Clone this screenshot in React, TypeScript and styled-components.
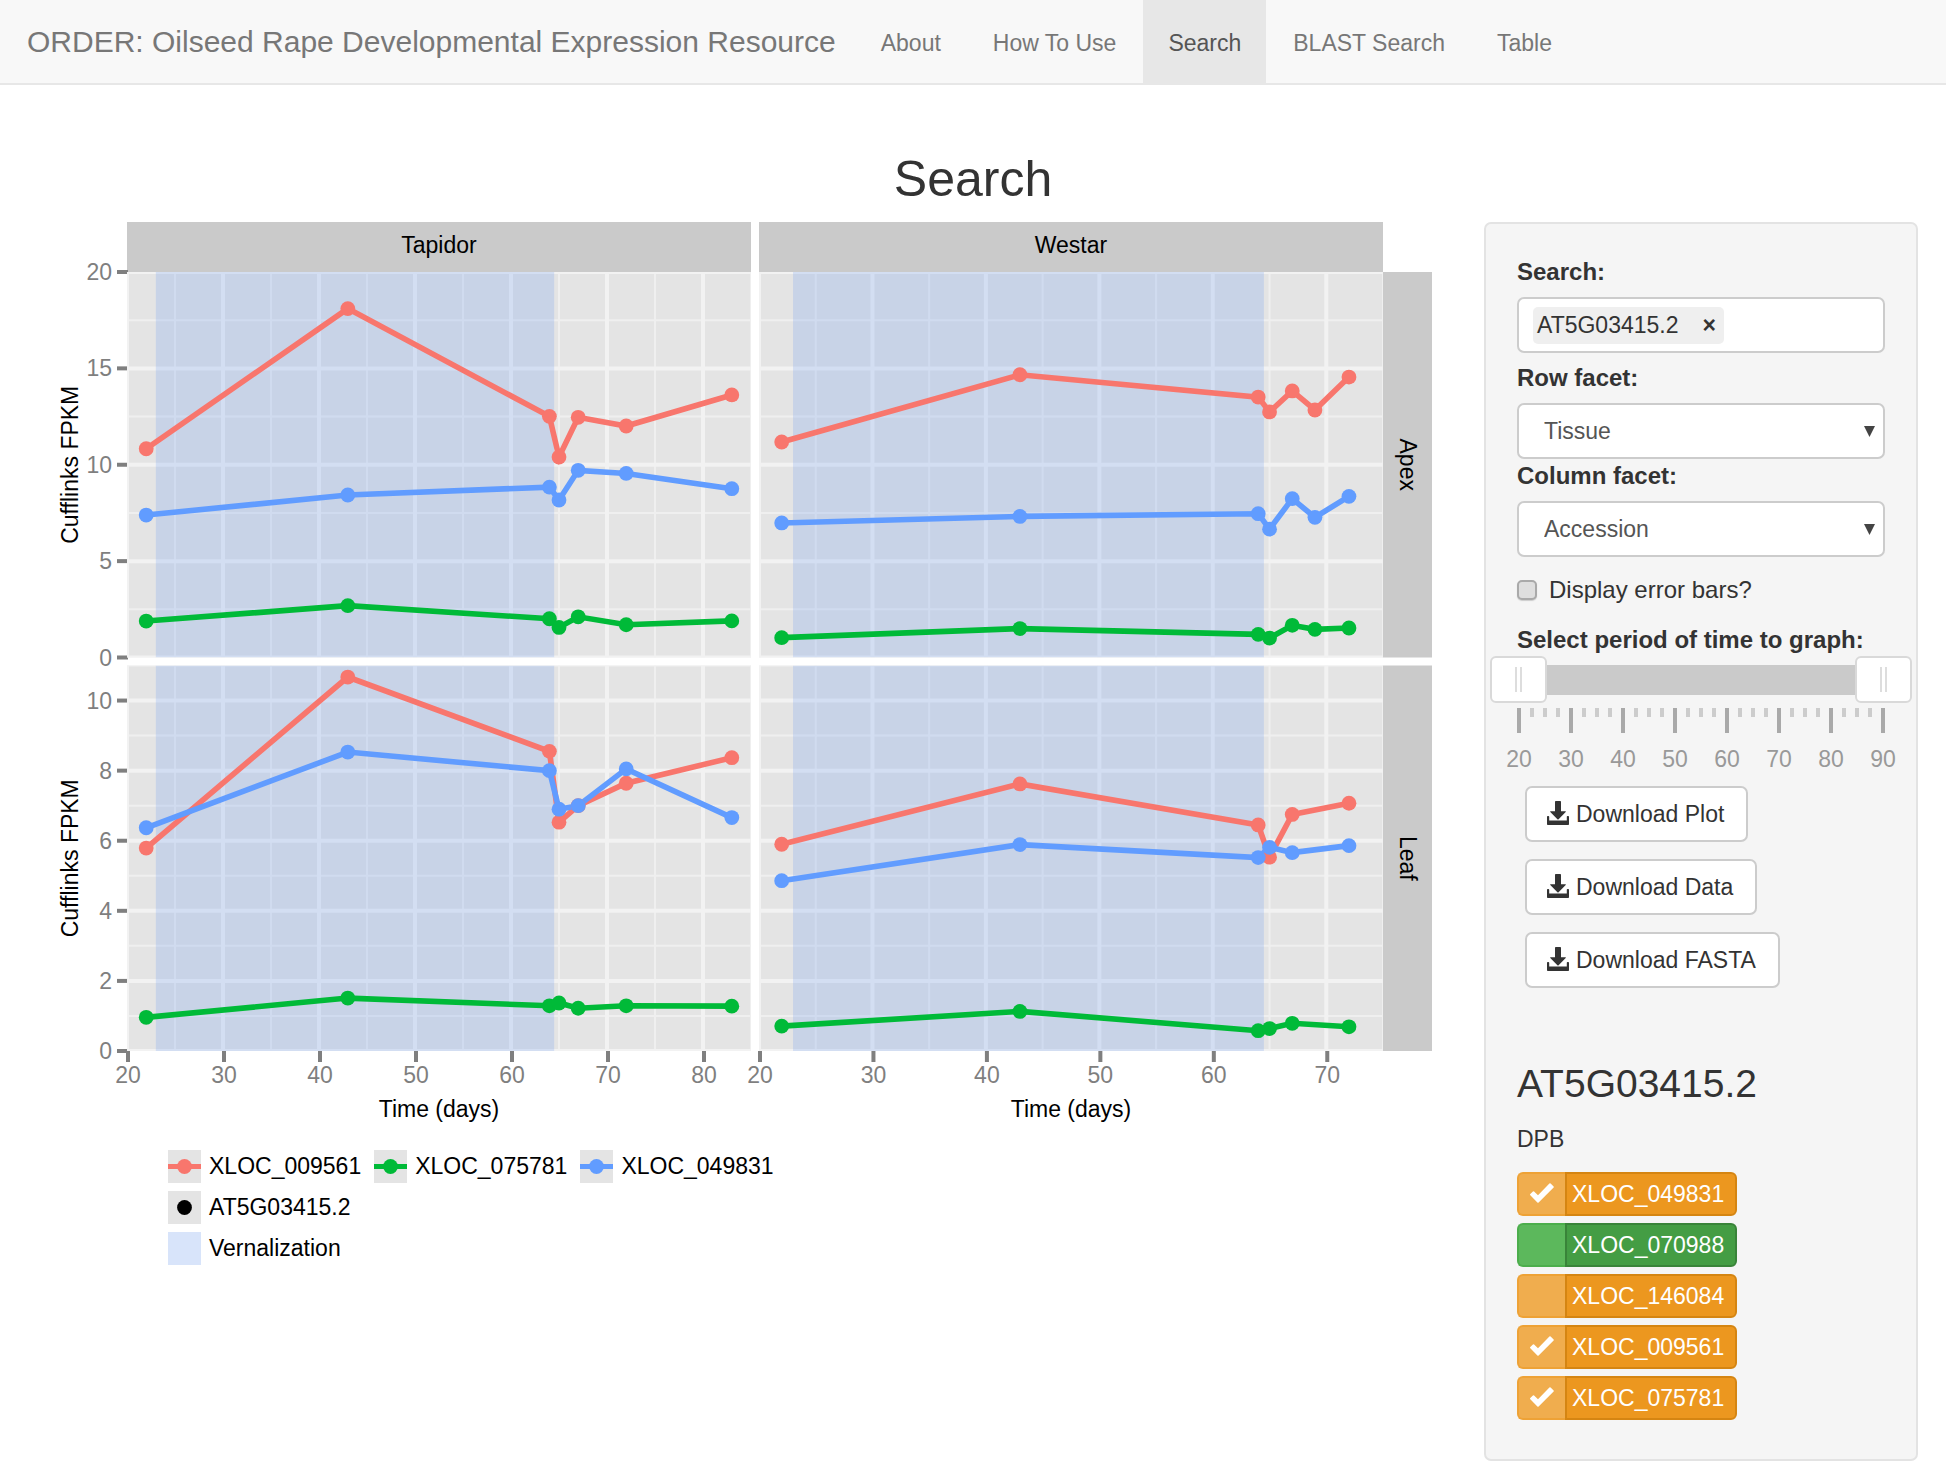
import React, { useState } from "react";
import styled, { createGlobalStyle } from "styled-components";

const GlobalStyle = createGlobalStyle`
  *, *::before, *::after { box-sizing: border-box; }
  body {
    margin: 0;
    background: #fff;
    color: #333;
    font: 23px/34px "Liberation Sans", Arial, sans-serif;
  }
  button, input, select { font: inherit; color: inherit; margin: 0; }
`;

/* ---------- navigation ---------- */

const Navbar = styled.nav`
  display: flex;
  flex-wrap: wrap;
  align-items: stretch;
  min-height: 85px;
  background: #f8f8f8;
  box-shadow: inset 0 -2px #e7e7e7;
`;

const Brand = styled.a`
  display: flex;
  align-items: center;
  padding: 0 20px 2px 27px;
  font-size: 30px;
  color: #777;
  text-decoration: none;
`;

const NavLinks = styled.ul`
  display: flex;
  flex-wrap: wrap;
  gap: 2px;
  margin: 0;
  padding: 0;
  list-style: none;
`;

const NavLink = styled.a<{ $active: boolean }>`
  display: flex;
  align-items: center;
  height: 100%;
  padding: 0 25px;
  color: ${(p) => (p.$active ? "#555" : "#777")};
  background: ${(p) => (p.$active ? "#e7e7e7" : "transparent")};
  text-decoration: none;
`;

/* ---------- page ---------- */

const PageTitle = styled.h2`
  margin: 67px 0 15px;
  font-size: 50px;
  line-height: 55px;
  font-weight: 400;
  text-align: center;
`;

const Columns = styled.div`
  display: grid;
  grid-template-columns: minmax(0, 1fr) 434px;
  gap: 52px;
  align-items: start;
  padding: 0 28px;
`;

const Chart = styled.svg`
  display: block;
  width: 100%;
  height: auto;
  font-size: 23px;
`;

const Legend = styled.div`
  display: flex;
  flex-direction: column;
  gap: 8px;
  margin: 24px 0 0 140px;
  color: #000;
`;

const LegendRow = styled.div`
  display: flex;
  gap: 13px;
`;

const LegendItem = styled.div`
  display: flex;
  gap: 8px;
  height: 33px;
  line-height: 32px;
`;

/* ---------- sidebar ---------- */

const Well = styled.aside`
  padding: 31px;
  background: #f5f5f5;
  border: 2px solid #e3e3e3;
  border-radius: 7px;
`;

const FieldLabel = styled.label`
  display: block;
  margin-bottom: 8px;
  font-size: 24px;
  font-weight: 700;
`;

const TagBox = styled.div`
  display: flex;
  align-items: center;
  gap: 8px;
  height: 56px;
  margin-bottom: 8px;
  padding: 0 14px;
  background: #fff;
  border: 2px solid #ccc;
  border-radius: 7px;
`;

const Tag = styled.span`
  display: flex;
  align-items: center;
  gap: 24px;
  height: 37px;
  padding: 0 8px 0 4px;
  background: #efefef;
  border-radius: 5px;
`;

const TagRemove = styled.button`
  padding: 0;
  border: 0;
  background: none;
  font-weight: 700;
`;

const TagInput = styled.input`
  flex: 1;
  min-width: 0;
  border: 0;
  outline: 0;
  background: none;
`;

const SelectWrap = styled.div`
  position: relative;
  color: #555;
`;

const Select = styled.select`
  display: block;
  width: 100%;
  height: 56px;
  padding: 0 40px 0 25px;
  appearance: none;
  background: #fff;
  border: 2px solid #ccc;
  border-radius: 7px;
`;

const SelectArrow = styled.svg`
  position: absolute;
  top: 23px;
  right: 10px;
  pointer-events: none;
  fill: #444;
`;

const CheckRow = styled.label`
  display: flex;
  align-items: center;
  gap: 12px;
  margin: 16px 0;
  font-size: 24px;
`;

const Checkbox = styled.input`
  width: 20px;
  height: 20px;
  appearance: none;
  background: #dedede;
  border: 2px solid #a9a9a9;
  border-radius: 5px;
  box-shadow: 0 1px 1px #ccc;
  &:checked { background: #777; }
`;

const RangeGroup = styled.fieldset`
  min-width: 0;
  margin: 0;
  padding: 0;
  border: 0;
`;

const RangeLegend = styled.legend`
  padding: 0;
  font-size: 24px;
  line-height: 33px;
  font-weight: 700;
  white-space: nowrap;
`;

const Slider = styled.div`
  position: relative;
  display: flex;
  align-items: center;
  height: 47px;
`;

const SliderBar = styled.div`
  flex: 1;
  height: 30px;
  background: #cacaca;
`;

const SliderInput = styled.input`
  position: absolute;
  top: 0;
  left: -27px;
  width: calc(100% + 54px);
  height: 47px;
  appearance: none;
  background: none;
  pointer-events: none;
  outline: none;
  &::-webkit-slider-thumb {
    appearance: none;
    width: 57px;
    height: 47px;
    border: 2px solid #d9d9d9;
    border-radius: 6px;
    pointer-events: auto;
    background:
      linear-gradient(#ddd, #ddd) 23px 9px / 2px 25px no-repeat,
      linear-gradient(#ddd, #ddd) 28px 9px / 2px 25px no-repeat,
      #fff;
  }
`;

const Ticks = styled.div`
  display: flex;
  justify-content: space-between;
  height: 25px;
  margin-top: 5px;
`;

const Tick = styled.span<{ $major: boolean }>`
  width: 4px;
  height: ${(p) => (p.$major ? "25px" : "9px")};
  background: ${(p) => (p.$major ? "#a9a9a9" : "#ccc")};
`;

const TickLabels = styled.div`
  display: flex;
  justify-content: space-between;
  margin: 9px -11px 10px;
  color: #999;
`;

const TickLabel = styled.span`
  width: 26px;
  text-align: center;
`;

const Downloads = styled.div`
  display: flex;
  flex-direction: column;
  align-items: flex-start;
  gap: 17px;
  margin: 0 0 74px 8px;
`;

const DownloadButton = styled.button`
  display: flex;
  align-items: center;
  gap: 7px;
  height: 56px;
  padding: 0 22px 0 20px;
  background: #fff;
  border: 2px solid #ccc;
  border-radius: 7px;
  svg { margin-bottom: 3px; }
`;

const GeneTitle = styled.h3`
  margin: 0 0 16px;
  font-size: 39px;
  line-height: 44px;
  font-weight: 400;
`;

const GeneAlias = styled.p`
  margin: 0 0 16px;
`;

const LocusList = styled.ul`
  display: flex;
  flex-direction: column;
  gap: 7px;
  margin: 0 0 8px;
  padding: 0;
  list-style: none;
`;

type Tone = "warning" | "success";
const tones = {
  warning: { light: "#f0ad4e", lightEdge: "#eea236", dark: "#ec971f", darkEdge: "#d58512" },
  success: { light: "#5cb85c", lightEdge: "#4cae4c", dark: "#449d44", darkEdge: "#398439" },
};

const LocusItem = styled.li`
  display: flex;
  height: 44px;
`;

const LocusToggle = styled.label<{ $tone: Tone }>`
  display: grid;
  place-items: center;
  width: 48px;
  background: ${(p) => tones[p.$tone].light};
  border: 2px solid ${(p) => tones[p.$tone].lightEdge};
  border-right: 0;
  border-radius: 6px 0 0 6px;
  input, svg { grid-area: 1 / 1; }
  input { appearance: none; width: 100%; height: 100%; }
  svg { pointer-events: none; margin-bottom: 2px; fill: #fff; }
`;

const LocusButton = styled.button<{ $tone: Tone }>`
  padding: 0 11px 0 5px;
  color: #fff;
  background: ${(p) => tones[p.$tone].dark};
  border: 2px solid ${(p) => tones[p.$tone].darkEdge};
  border-radius: 0 6px 6px 0;
`;

/* ---------- data ---------- */

const RED = "#f8766d";
const GREEN = "#00ba38";
const BLUE = "#619cff";

interface Series { color: string; values: number[] }
interface PanelData { col: number; row: number; days: number[]; series: Series[] }

const cols = [
  { name: "Tapidor", x: 99, max: 85, majors: [20, 30, 40, 50, 60, 70, 80] },
  { name: "Westar", x: 731, max: 75, majors: [20, 30, 40, 50, 60, 70] },
];
const rows = [
  { name: "Apex", y: 50, max: 20, step: 5 },
  { name: "Leaf", y: 443.5, max: 11, step: 2 },
];
const PANEL_W = 624;
const PANEL_H = 385.5;

const panels: PanelData[] = [
  {
    col: 0, row: 0, days: [22, 43, 64, 65, 67, 72, 83],
    series: [
      { color: RED, values: [10.83, 18.1, 12.51, 10.4, 12.46, 12.01, 13.62] },
      { color: GREEN, values: [1.89, 2.69, 2.01, 1.56, 2.11, 1.7, 1.9] },
      { color: BLUE, values: [7.39, 8.43, 8.84, 8.17, 9.71, 9.55, 8.76] },
    ],
  },
  {
    col: 1, row: 0, days: [22, 43, 64, 65, 67, 69, 72],
    series: [
      { color: RED, values: [11.18, 14.67, 13.51, 12.74, 13.83, 12.84, 14.55] },
      { color: GREEN, values: [1.03, 1.5, 1.2, 1.01, 1.67, 1.46, 1.53] },
      { color: BLUE, values: [6.98, 7.32, 7.46, 6.66, 8.24, 7.27, 8.36] },
    ],
  },
  {
    col: 0, row: 1, days: [22, 43, 64, 65, 67, 72, 83],
    series: [
      { color: RED, values: [5.79, 10.67, 8.55, 6.53, 7, 7.64, 8.37] },
      { color: GREEN, values: [0.96, 1.51, 1.29, 1.37, 1.22, 1.29, 1.28] },
      { color: BLUE, values: [6.37, 8.53, 8, 6.9, 7, 8.05, 6.66] },
    ],
  },
  {
    col: 1, row: 1, days: [22, 43, 64, 65, 67, 72],
    series: [
      { color: RED, values: [5.9, 7.62, 6.45, 5.53, 6.75, 7.07] },
      { color: GREEN, values: [0.71, 1.13, 0.58, 0.64, 0.79, 0.69] },
      { color: BLUE, values: [4.86, 5.89, 5.52, 5.81, 5.66, 5.86] },
    ],
  },
];

const scaleX = (col: number, day: number) =>
  cols[col].x + ((day - 20) / (cols[col].max - 20)) * PANEL_W;
const scaleY = (row: number, v: number) =>
  rows[row].y + PANEL_H - (v / rows[row].max) * PANEL_H;

const range = (from: number, to: number, step: number) => {
  const out: number[] = [];
  for (let v = from; v <= to; v += step) out.push(v);
  return out;
};

/* ---------- chart ---------- */

function Panel({ col, row, days, series }: PanelData) {
  const { x, max: maxX } = cols[col];
  const { y, max: maxY, step } = rows[row];
  const clip = `panel-${col}-${row}`;
  const vLine = (d: number, w: number, c: string) => (
    <line key={`v${d}`} x1={scaleX(col, d)} x2={scaleX(col, d)} y1={y} y2={y + PANEL_H} stroke={c} strokeWidth={w} />
  );
  const hLine = (v: number, w: number, c: string) => (
    <line key={`h${v}`} x1={x} x2={x + PANEL_W} y1={scaleY(row, v)} y2={scaleY(row, v)} stroke={c} strokeWidth={w} />
  );
  return (
    <g>
      <clipPath id={clip}><rect x={x} y={y} width={PANEL_W} height={PANEL_H} /></clipPath>
      <g clipPath={`url(#${clip})`}>
        <rect x={x} y={y} width={PANEL_W} height={PANEL_H} fill="#e4e4e4" />
        {range(25, maxX, 10).map((d) => vLine(d, 2, "#efefef"))}
        {range(step / 2, maxY, step).map((v) => hLine(v, 2, "#efefef"))}
        {range(20, maxX, 10).map((d) => vLine(d, 4, "#f2f2f2"))}
        {range(0, maxY, step).map((v) => hLine(v, 4, "#f2f2f2"))}
        <rect
          x={scaleX(col, 23)} y={y} width={scaleX(col, 64.5) - scaleX(col, 23)} height={PANEL_H}
          fill="#6a9cf0" fillOpacity={0.23}
        />
        {series.map((s) => (
          <polyline
            key={s.color} fill="none" stroke={s.color} strokeWidth={5.6}
            points={s.values.map((v, i) => `${scaleX(col, days[i])},${scaleY(row, v)}`).join(" ")}
          />
        ))}
        {series.map((s) => s.values.map((v, i) => (
          <circle key={`${s.color}${i}`} cx={scaleX(col, days[i])} cy={scaleY(row, v)} r={7.4} fill={s.color} />
        )))}
      </g>
    </g>
  );
}

function ExpressionChart() {
  const bottom = rows[1].y + PANEL_H;
  return (
    <Chart viewBox="0 0 1404 904" role="img" aria-label="Expression over time by tissue and accession">
      {cols.map((c, i) => (
        <g key={c.name}>
          <rect x={c.x} y={0} width={PANEL_W} height={50} fill="#cacaca" />
          <text x={c.x + PANEL_W / 2} y={31} textAnchor="middle">{c.name}</text>
          {c.majors.map((d) => (
            <g key={d} fill="#7f7f7f">
              <rect x={scaleX(i, d) - 1} y={bottom} width={4} height={11} />
              <text x={scaleX(i, d) + 1} y={861} textAnchor="middle">{d}</text>
            </g>
          ))}
          <text x={c.x + PANEL_W / 2} y={895} textAnchor="middle">Time (days)</text>
        </g>
      ))}
      {rows.map((r, i) => (
        <g key={r.name}>
          <rect x={1355} y={r.y} width={49} height={PANEL_H} fill="#cacaca" />
          <text transform={`translate(1372 ${r.y + PANEL_H / 2}) rotate(90)`} textAnchor="middle">{r.name}</text>
          {range(0, r.max, r.step).map((v) => (
            <g key={v} fill="#7f7f7f">
              <rect x={89} y={scaleY(i, v) - 2} width={11} height={4} />
              <text x={84} y={scaleY(i, v) + 8} textAnchor="end">{v}</text>
            </g>
          ))}
          <text transform={`translate(50 ${r.y + PANEL_H / 2}) rotate(-90)`} textAnchor="middle">Cufflinks FPKM</text>
        </g>
      ))}
      {panels.map((p) => <Panel key={`${p.col}${p.row}`} {...p} />)}
    </Chart>
  );
}

function Swatch({ bg = "#e4e4e4", line, dot }: { bg?: string; line?: string; dot?: string }) {
  return (
    <svg width="33" height="33" viewBox="0 0 33 33" aria-hidden="true">
      <rect width="33" height="33" fill={bg} />
      {line && <path d="M0 16.5h33" stroke={line} strokeWidth="5" />}
      {dot && <circle cx="16.5" cy="16.5" r="7.4" fill={dot} />}
    </svg>
  );
}

function ChartLegend() {
  return (
    <Legend>
      <LegendRow>
        <LegendItem><Swatch line={RED} dot={RED} />XLOC_009561</LegendItem>
        <LegendItem><Swatch line={GREEN} dot={GREEN} />XLOC_075781</LegendItem>
        <LegendItem><Swatch line={BLUE} dot={BLUE} />XLOC_049831</LegendItem>
      </LegendRow>
      <LegendItem><Swatch dot="#000" />AT5G03415.2</LegendItem>
      <LegendItem><Swatch bg="#d8e4fa" />Vernalization</LegendItem>
    </Legend>
  );
}

/* ---------- controls ---------- */

function Dropdown({ id, label, options }: { id: string; label: string; options: string[] }) {
  return (
    <>
      <FieldLabel htmlFor={id}>{label}</FieldLabel>
      <SelectWrap>
        <Select id={id} defaultValue={options[0]}>
          {options.map((o) => <option key={o}>{o}</option>)}
        </Select>
        <SelectArrow width="11" height="11" viewBox="0 0 11 11" aria-hidden="true">
          <path d="M0 0h11L5.5 11z" />
        </SelectArrow>
      </SelectWrap>
    </>
  );
}

function TimeRange() {
  const [from, setFrom] = useState(20);
  const [to, setTo] = useState(90);
  return (
    <RangeGroup>
      <RangeLegend>Select period of time to graph:</RangeLegend>
      <Slider>
        <SliderBar />
        <SliderInput
          type="range" min={20} max={90} value={from} aria-label="From day"
          onChange={(e) => setFrom(Math.min(+e.target.value, to))}
        />
        <SliderInput
          type="range" min={20} max={90} value={to} aria-label="To day"
          onChange={(e) => setTo(Math.max(+e.target.value, from))}
        />
      </Slider>
      <Ticks>
        {range(0, 28, 1).map((i) => <Tick key={i} $major={i % 4 === 0} />)}
      </Ticks>
      <TickLabels>
        {range(20, 90, 10).map((d) => <TickLabel key={d}>{d}</TickLabel>)}
      </TickLabels>
    </RangeGroup>
  );
}

function DownloadIcon() {
  return (
    <svg width="22" height="24" viewBox="0 0 22 24" fill="#333" aria-hidden="true">
      <path d="M8 0.8Q8 0 8.8 0h4.4Q14 0 14 .8V10.2h4.4q.9 0 .3.7L11.6 18.3q-.6.6-1.2 0L3.3 10.9q-.6-.7.3-.7H8z" />
      <path d="M0 15.8Q0 15 .8 15h.6q.8 0 .8.8v3.8h17.6v-3.800q0-.8.8-.8h.6q.8 0 .8.8v7.4q0 .8-.8.8H.8Q0 24 0 23.2z" />
    </svg>
  );
}

function Locus({ name, tone, initial }: { name: string; tone: Tone; initial: boolean }) {
  const [on, setOn] = useState(initial);
  return (
    <LocusItem>
      <LocusToggle $tone={tone}>
        <input type="checkbox" aria-label={`Plot ${name}`} checked={on} onChange={() => setOn(!on)} />
        {on && (
          <svg width="24" height="20" viewBox="0 0 24 20" aria-hidden="true">
            <path d="M0.3 11 L2.9 8.6 Q3.5 8.1 4.1 8.6 L8 12.3 L19.4 0.6 Q20 0 20.6 0.6 L23.6 3.4 Q24.2 4 23.6 4.6 L8.6 19.5 Q8 20 7.4 19.5 L0.3 12.2 Q-0.3 11.6 0.3 11 Z" />
          </svg>
        )}
      </LocusToggle>
      <LocusButton type="button" $tone={tone}>{name}</LocusButton>
    </LocusItem>
  );
}

const navItems = ["About", "How To Use", "Search", "BLAST Search", "Table"];
const downloads = ["Download Plot", "Download Data", "Download FASTA"];
const loci: { name: string; tone: Tone; initial: boolean }[] = [
  { name: "XLOC_049831", tone: "warning", initial: true },
  { name: "XLOC_070988", tone: "success", initial: false },
  { name: "XLOC_146084", tone: "warning", initial: false },
  { name: "XLOC_009561", tone: "warning", initial: true },
  { name: "XLOC_075781", tone: "warning", initial: true },
];

export default function App() {
  return (
    <>
      <GlobalStyle />
      <Navbar>
        <Brand href="#">ORDER: Oilseed Rape Developmental Expression Resource</Brand>
        <NavLinks>
          {navItems.map((item) => (
            <li key={item}>
              <NavLink href="#" $active={item === "Search"}>{item}</NavLink>
            </li>
          ))}
        </NavLinks>
      </Navbar>
      <PageTitle>Search</PageTitle>
      <Columns>
        <main>
          <ExpressionChart />
          <ChartLegend />
        </main>
        <Well>
          <FieldLabel htmlFor="gene-search">Search:</FieldLabel>
          <TagBox>
            <Tag>
              AT5G03415.2
              <TagRemove type="button" aria-label="Remove AT5G03415.2">×</TagRemove>
            </Tag>
            <TagInput id="gene-search" type="text" />
          </TagBox>
          <Dropdown id="row-facet" label="Row facet:" options={["Tissue", "Accession"]} />
          <Dropdown id="column-facet" label="Column facet:" options={["Accession", "Tissue"]} />
          <CheckRow>
            <Checkbox type="checkbox" />
            Display error bars?
          </CheckRow>
          <TimeRange />
          <Downloads>
            {downloads.map((d) => (
              <DownloadButton key={d} type="button"><DownloadIcon />{d}</DownloadButton>
            ))}
          </Downloads>
          <GeneTitle>AT5G03415.2</GeneTitle>
          <GeneAlias>DPB</GeneAlias>
          <LocusList>
            {loci.map((l) => <Locus key={l.name} {...l} />)}
          </LocusList>
        </Well>
      </Columns>
    </>
  );
}
